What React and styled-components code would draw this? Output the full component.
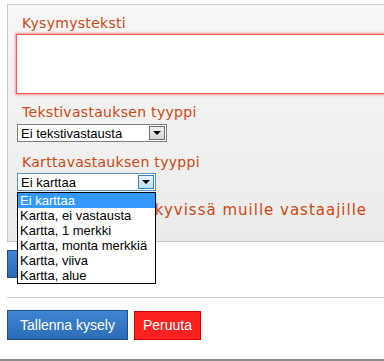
import React from "react";
import styled, { createGlobalStyle } from "styled-components";

const Global = createGlobalStyle`
  html, body {
    margin: 0;
    padding: 0;
    background: #ffffff;
    overflow: hidden;
  }
  body {
    font-family: "Liberation Sans", Arial, sans-serif;
  }
`;

const Page = styled.div`
  width: 384px;
  height: 361px;
  overflow: hidden;
  padding: 4px 0 0 7px;
  box-sizing: border-box;
`;

const Panel = styled.div`
  width: 430px;
  border: 1px solid #c9c9c9;
  border-right: none;
  background: linear-gradient(#f7f7f7, #ebebeb);
  padding: 9px 0 22px 8px;
`;

const Label = styled.div`
  font-family: "DejaVu Sans", Verdana, sans-serif;
  font-size: ${(p) => (p.big ? 15 : 14)}px;
  line-height: 18px;
  letter-spacing: ${(p) => (p.big ? 1 : 0.3)}px;
  color: #cd4912;
  padding-left: ${(p) => (p.flush ? 0 : 6)}px;
  margin-top: ${(p) => p.gap || 0}px;
  white-space: nowrap;
`;

const TextArea = styled.textarea`
  display: block;
  box-sizing: border-box;
  width: 420px;
  height: 60px;
  margin: 2px 0 0 0;
  border: 1px solid #ff5a5a;
  box-shadow: 0 0 2px 1px rgba(255, 110, 110, 0.7);
  background: #ffffff;
  resize: none;
  outline: none;
`;

const SelectWrap = styled.div`
  position: relative;
  margin: ${(p) => p.gap}px 0 0 1px;
  width: ${(p) => p.width}px;
  z-index: ${(p) => (p.open ? 5 : 1)};
`;

const SelectBox = styled.div`
  box-sizing: border-box;
  height: 18px;
  border: 1px solid ${(p) => (p.open ? "#5c93c8" : "#7f7f7f")};
  background: #ffffff;
  display: flex;
  align-items: center;
  justify-content: space-between;
  padding: 0 1px 0 3px;
  font-size: 13px;
  color: #000;
`;

const Arrow = styled.span`
  box-sizing: border-box;
  width: 16px;
  height: 14px;
  border: 1px solid ${(p) => (p.open ? "#3c7fb1" : "#707070")};
  background: ${(p) =>
    p.open
      ? "linear-gradient(#e6f5fd, #b9e0f6)"
      : "linear-gradient(#f0f0f0, #d6d6d6)"};
  display: flex;
  align-items: center;
  justify-content: center;
  &::after {
    content: "";
    border-left: 4px solid transparent;
    border-right: 4px solid transparent;
    border-top: 4px solid #000;
  }
`;

const List = styled.ul`
  position: absolute;
  top: 100%;
  left: 0;
  width: 100%;
  box-sizing: border-box;
  margin: 1px 0 0 0;
  padding: 0;
  list-style: none;
  background: #ffffff;
  border: 1px solid #000000;
`;

const Option = styled.li`
  height: 15px;
  line-height: 15px;
  font-size: 13px;
  padding-left: 2px;
  white-space: nowrap;
  background: ${(p) => (p.active ? "#3399ff" : "transparent")};
  color: ${(p) => (p.active ? "#ffffff" : "#000000")};
`;

const CheckRow = styled.label`
  display: flex;
  align-items: center;
  margin-top: 10px;
  padding-left: 2px;
  input {
    margin: 0 ${(p) => p.space}px 0 0;
    width: 13px;
    height: 13px;
  }
`;

const Button = styled.button`
  box-sizing: border-box;
  height: ${(p) => p.h || 30}px;
  padding: 0 ${(p) => p.pad || 12}px;
  font-family: "Liberation Sans", Arial, sans-serif;
  font-size: 14px;
  color: #ffffff;
  border: 1px solid ${(p) => (p.red ? "#cc0000" : "#1f4e86")};
  background: ${(p) =>
    p.red ? "#ff2020" : "linear-gradient(#3e86d2, #2c6cb6)"};
  border-radius: 0;
  cursor: pointer;
`;

const Hidden = styled(Button)`
  display: block;
  margin-top: 8px;
  width: 140px;
  height: 28px;
`;

const Rule = styled.hr`
  margin: 19px 0 0 0;
  width: 400px;
  border: none;
  border-top: 1px solid #cccccc;
`;

const Actions = styled.div`
  display: flex;
  align-items: center;
  gap: 6px;
  margin-top: 12px;
`;

const Footer = styled.div`
  margin-top: 19px;
  margin-left: -7px;
  height: 10px;
  border-top: 2px solid #8a8a8a;
  background: #f0f0f0;
`;

const mapOptions = [
  "Ei karttaa",
  "Kartta, ei vastausta",
  "Kartta, 1 merkki",
  "Kartta, monta merkkiä",
  "Kartta, viiva",
  "Kartta, alue",
];

export default function App() {
  return (
    <>
      <Global />
      <Page>
        <Panel>
          <Label>Kysymysteksti</Label>
          <TextArea />
          <Label gap={9}>Tekstivastauksen tyyppi</Label>
          <SelectWrap gap={3} width={150}>
            <SelectBox>
              Ei tekstivastausta
              <Arrow />
            </SelectBox>
          </SelectWrap>
          <Label gap={11}>Karttavastauksen tyyppi</Label>
          <SelectWrap gap={2} width={139} open>
            <SelectBox open>
              Ei karttaa
              <Arrow open />
            </SelectBox>
            <List>
              {mapOptions.map((o, i) => (
                <Option key={o} active={i === 0}>
                  {o}
                </Option>
              ))}
            </List>
          </SelectWrap>
          <CheckRow space={5}>
            <input type="checkbox" />
            <Label as="span" big flush>
              Vastaukset näkyvissä muille vastaajille
            </Label>
          </CheckRow>
        </Panel>
        <Hidden>Lisää kysymys</Hidden>
        <Rule />
        <Actions>
          <Button pad={12}>Tallenna kysely</Button>
          <Button red h={29} pad={8}>
            Peruuta
          </Button>
        </Actions>
        <Footer />
      </Page>
    </>
  );
}
